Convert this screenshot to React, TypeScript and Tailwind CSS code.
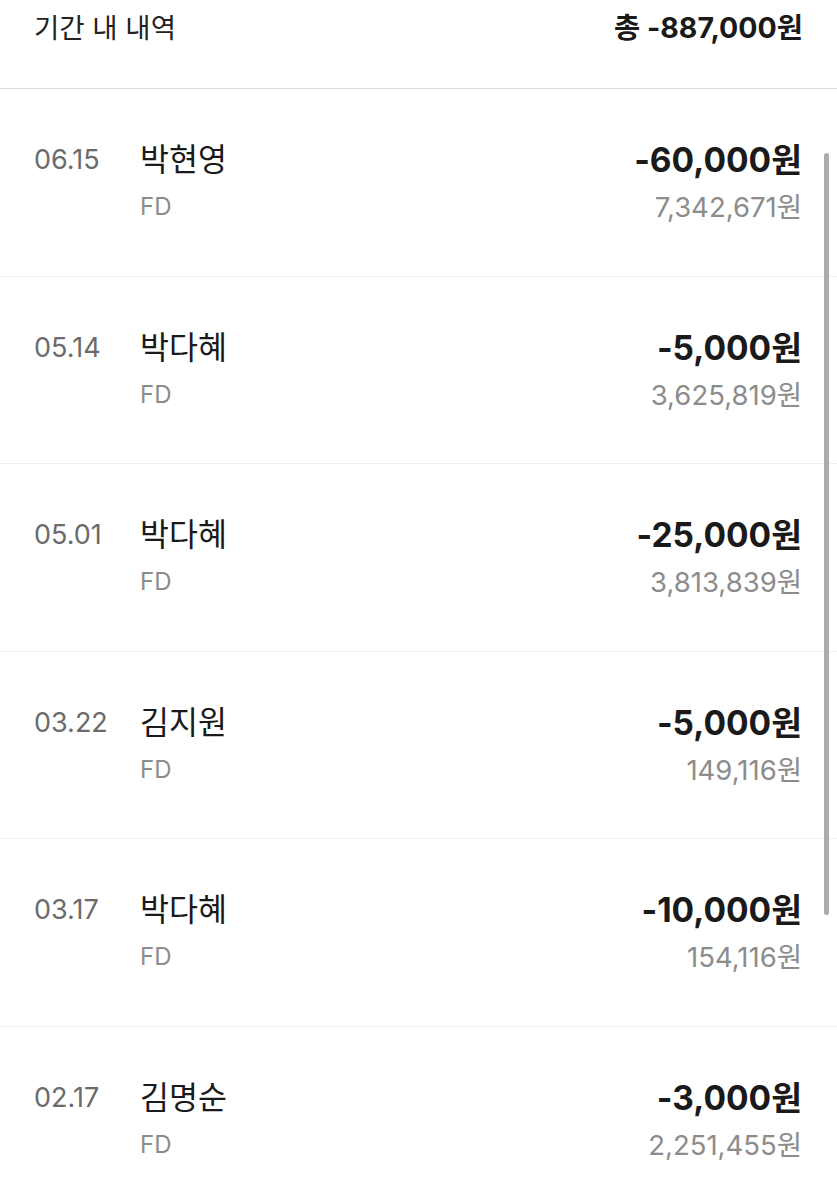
import React from "react";

const rows = [
  { date: "06.15", name: "박현영", amount: "-60,000원", balance: "7,342,671원" },
  { date: "05.14", name: "박다혜", amount: "-5,000원", balance: "3,625,819원" },
  { date: "05.01", name: "박다혜", amount: "-25,000원", balance: "3,813,839원" },
  { date: "03.22", name: "김지원", amount: "-5,000원", balance: "149,116원" },
  { date: "03.17", name: "박다혜", amount: "-10,000원", balance: "154,116원" },
  { date: "02.17", name: "김명순", amount: "-3,000원", balance: "2,251,455원" },
];

export default function App() {
  return (
    <div
      className="relative w-[837px] h-[1200px] overflow-hidden bg-white"
      style={{ fontFamily: '"Inter", "Noto Sans CJK KR", sans-serif' }}
    >
      <div className="flex h-[89px] items-start justify-between border-b border-[#dcdcdc] px-[34px] pt-[8px]">
        <span className="text-[27.5px] leading-[40px] text-[#222]">기간 내 내역</span>
        <span className="text-[28.5px] leading-[40px] font-bold text-[#1a1a1a]">총 -887,000원</span>
      </div>
      {rows.map((r, i) => (
        <div
          key={i}
          className="flex h-[187.5px] items-start border-b border-[#efefef] pl-[34px] pr-[35px] pt-[50px]"
        >
          <div className="w-[106px] text-[27px] leading-[42px] text-[#6b6b6b]">{r.date}</div>
          <div className="flex flex-1 flex-col gap-[10px]">
            <span className="text-[31.5px] leading-[42px] text-[#1a1a1a]">{r.name}</span>
            <span className="text-[24px] leading-[32px] text-[#8c8c8c]">FD</span>
          </div>
          <div className="flex flex-col items-end gap-[10px]">
            <span className="text-[33.5px] leading-[42px] font-bold text-[#1a1a1a]">{r.amount}</span>
            <span className="text-[27.5px] leading-[32px] text-[#8c8c8c]">{r.balance}</span>
          </div>
        </div>
      ))}
      <div className="absolute left-[824px] top-[153px] h-[762px] w-[5px] rounded-full bg-[#ababab]" />
    </div>
  );
}
